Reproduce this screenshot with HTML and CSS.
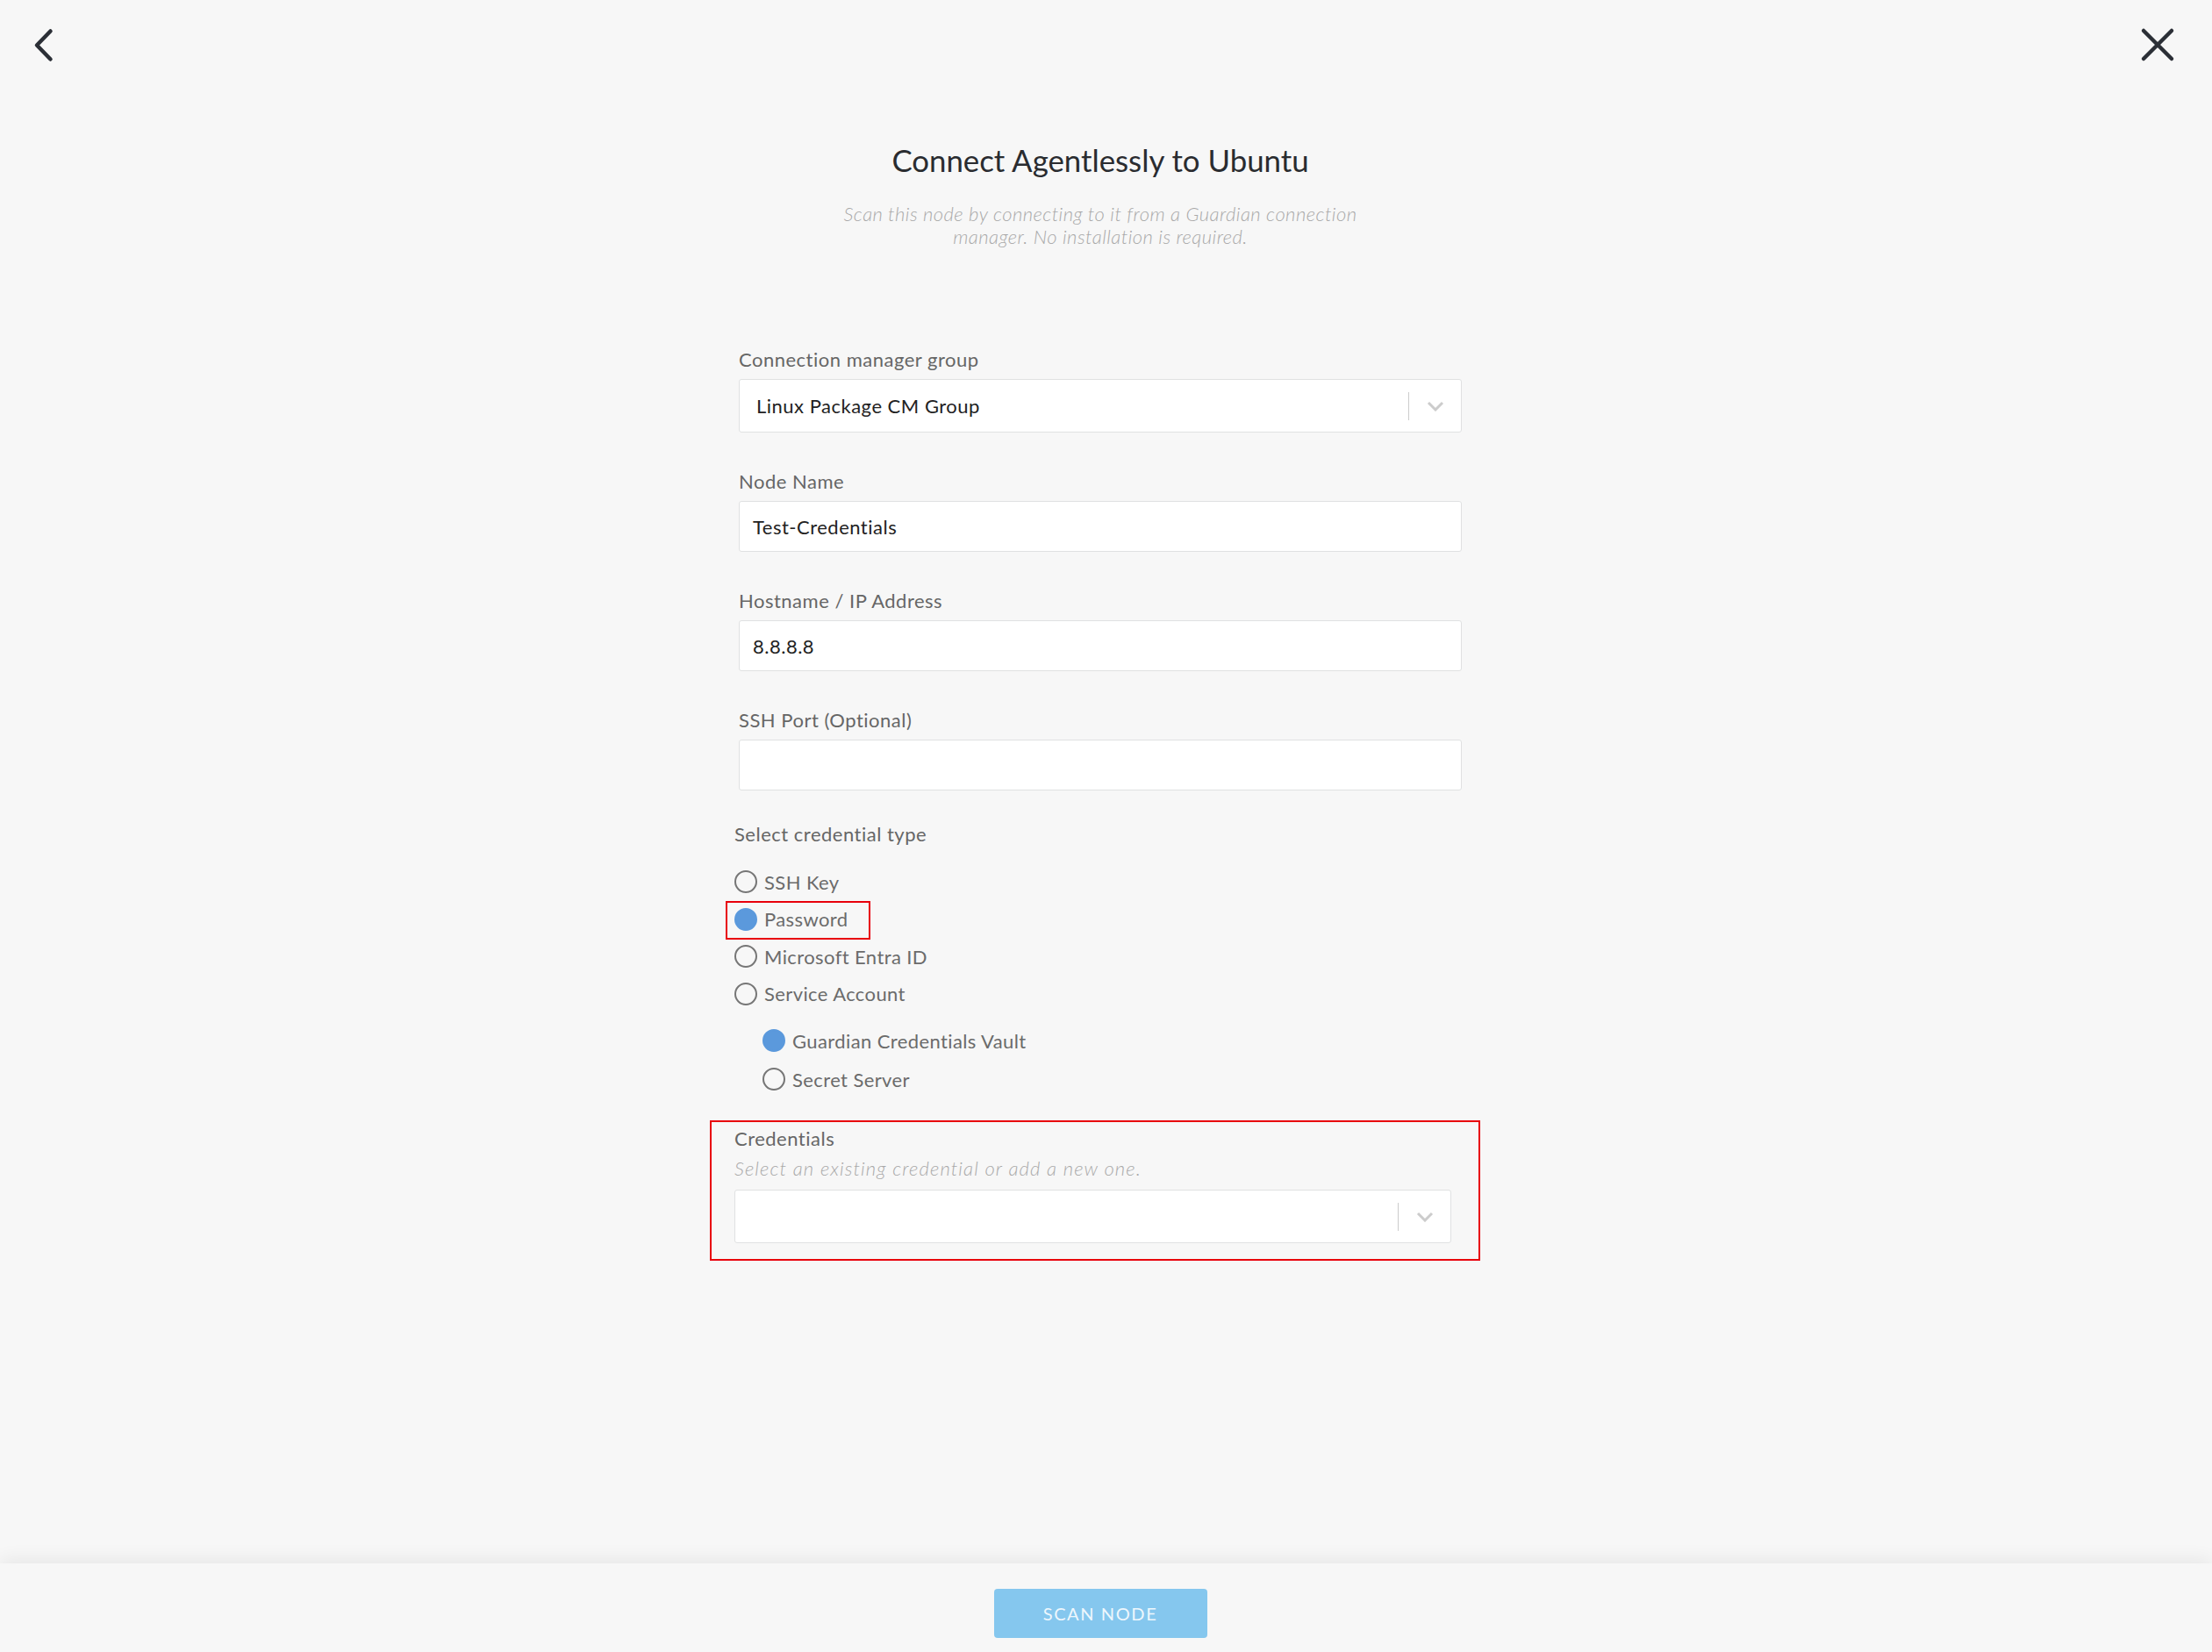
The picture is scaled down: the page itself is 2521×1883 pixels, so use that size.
FILE: index.html
```html
<!DOCTYPE html>
<html lang="en">
<head>
<meta charset="utf-8">
<title>Connect Agentlessly to Ubuntu</title>
<link rel="stylesheet" href="styles.css">
</head>
<body>
<div class="page">
  <header class="topbar">
    <button class="icon-btn back" type="button" aria-label="Back">
      <svg width="28" height="48" viewBox="0 0 28 48"><polyline points="21.5,7.5 6,23.5 21.5,39.5" fill="none" stroke="#2b2f36" stroke-width="4.5" stroke-linecap="round" stroke-linejoin="round"/></svg>
    </button>
    <button class="icon-btn close" type="button" aria-label="Close">
      <svg width="46" height="46" viewBox="0 0 46 46"><path d="M7 7 L39 39 M39 7 L7 39" fill="none" stroke="#2b2f36" stroke-width="4.5" stroke-linecap="round"/></svg>
    </button>
  </header>

  <main class="main">
    <div class="column">
      <h1 class="title">Connect Agentlessly to Ubuntu</h1>
      <p class="subtitle">Scan this node by connecting to it from a Guardian connection manager. No installation is required.</p>

      <div class="form">
        <div class="field">
          <div class="label">Connection manager group</div>
          <div class="select">
            <span class="select-value">Linux Package CM Group</span>
            <span class="select-sep"></span>
            <span class="select-arrow"><svg width="20" height="12" viewBox="0 0 20 12"><polyline points="2,2 10,10 18,2" fill="none" stroke="#cccccc" stroke-width="3"/></svg></span>
          </div>
        </div>

        <div class="field">
          <div class="label">Node Name</div>
          <div class="input">Test-Credentials</div>
        </div>

        <div class="field">
          <div class="label">Hostname / IP Address</div>
          <div class="input">8.8.8.8</div>
        </div>

        <div class="field">
          <div class="label">SSH Port (Optional)</div>
          <div class="input"></div>
        </div>

        <div class="cred-type">
          <div class="label">Select credential type</div>
          <div class="radio-list">
            <div class="radio"><span class="dot"></span><span class="radio-text">SSH Key</span></div>
            <div class="radio annot"><span class="dot on"></span><span class="radio-text">Password</span></div>
            <div class="radio"><span class="dot"></span><span class="radio-text">Microsoft Entra ID</span></div>
            <div class="radio"><span class="dot"></span><span class="radio-text">Service Account</span></div>
          </div>
          <div class="radio-list sub">
            <div class="radio tall"><span class="dot on"></span><span class="radio-text">Guardian Credentials Vault</span></div>
            <div class="radio tall"><span class="dot"></span><span class="radio-text">Secret Server</span></div>
          </div>
        </div>

        <div class="credentials">
          <div class="label">Credentials</div>
          <div class="helper">Select an existing credential or add a new one.</div>
          <div class="select cred-select">
            <span class="select-value"></span>
            <span class="select-sep"></span>
            <span class="select-arrow"><svg width="20" height="12" viewBox="0 0 20 12"><polyline points="2,2 10,10 18,2" fill="none" stroke="#cccccc" stroke-width="3"/></svg></span>
          </div>
        </div>
      </div>
    </div>
  </main>

  <footer class="footer">
    <button class="scan-btn" type="button">SCAN NODE</button>
  </footer>
</div>
</body>
</html>
```

FILE: styles.css
```css
* { box-sizing: border-box; }

html, body {
  margin: 0;
  padding: 0;
  height: 100%;
}

body {
  background: #f7f7f7;
  font-family: Lato, "Open Sans", "Liberation Sans", sans-serif;
  color: #2b2b2b;
}

.page {
  display: flex;
  flex-direction: column;
  height: 100vh;
  overflow: hidden;
}

.topbar {
  display: flex;
  justify-content: space-between;
  align-items: flex-start;
  height: 100px;
  padding: 28px 39px 0 36px;
  flex: none;
}

.icon-btn {
  border: 0;
  background: none;
  padding: 0;
  margin: 0;
  line-height: 0;
  cursor: pointer;
}

.main {
  flex: 1;
  padding-right: 13px;
}

.column {
  width: 824px;
  margin: 0 auto;
}

.title {
  margin: 62px 0 0;
  font-size: 34.8px;
  line-height: 42px;
  font-weight: 400;
  text-align: center;
  color: #2a2c30;
}

.subtitle {
  margin: 27px auto 0;
  max-width: 610px;
  font-size: 22px;
  line-height: 25.5px;
  letter-spacing: 0.45px;
  font-weight: 300;
  font-style: italic;
  text-align: center;
  color: #a9a9a9;
}

.form {
  margin-top: 115px;
}

.field {
  margin-bottom: 43px;
}

.label {
  font-size: 22px;
  line-height: 26px;
  letter-spacing: 0.5px;
  color: #666666;
  margin-bottom: 9px;
}

.input,
.select {
  background: #ffffff;
  border: 1px solid #e0e1e2;
  border-radius: 3px;
  font-size: 22px;
  letter-spacing: 0.5px;
  color: #222222;
  display: flex;
  align-items: center;
}

.input {
  height: 58px;
  padding: 0 15px;
}

.select {
  height: 61px;
  padding-left: 19px;
}

.select-value {
  flex: 1;
}

.select-sep {
  width: 1px;
  height: 32px;
  background: #cccccc;
}

.select-arrow {
  width: 59px;
  display: flex;
  justify-content: center;
  align-items: center;
  line-height: 0;
}

.cred-type {
  margin-top: -6px;
  margin-left: -5px;
}

.cred-type > .label {
  margin-bottom: 20px;
}

.radio-list.sub {
  margin-top: 10px;
  margin-left: 32px;
}

.radio {
  display: flex;
  align-items: center;
  height: 42.5px;
  position: relative;
}

.radio.tall {
  height: 44px;
}

.dot {
  width: 26px;
  height: 26px;
  border-radius: 50%;
  border: 2px solid #767676;
  background: transparent;
  flex: none;
}

.dot.on {
  border-color: #5b99dc;
  background: #5b99dc;
}

.radio-text {
  margin-left: 8px;
  font-size: 22px;
  letter-spacing: 0.4px;
  color: #6b6b6b;
}

.radio.annot::after {
  content: "";
  position: absolute;
  left: -10px;
  top: 0;
  height: 40px;
  width: 161px;
  border: 2px solid #e8000b;
}

.credentials {
  margin: 25px -21px 0 -33px;
  border: 2px solid #e8000b;
  padding: 6px 31px 18px 26px;
}

.credentials .label {
  margin-bottom: 8px;
}

.helper {
  font-size: 22px;
  line-height: 26px;
  letter-spacing: 1.1px;
  font-weight: 300;
  font-style: italic;
  color: #a9a9a9;
  margin-bottom: 11px;
}

.footer {
  flex: none;
  height: 101px;
  padding-top: 29px;
  display: flex;
  justify-content: center;
  align-items: flex-start;
  background: #f7f7f7;
  box-shadow: 0 -4px 20px rgba(0, 0, 0, 0.07);
  position: relative;
}

.scan-btn {
  width: 243px;
  height: 56px;
  margin-right: 13px;
  border: 0;
  border-radius: 4px;
  background: #85c7ee;
  color: #eef7fd;
  font-family: Lato, "Open Sans", "Liberation Sans", sans-serif;
  font-size: 20px;
  letter-spacing: 1.6px;
  cursor: pointer;
}
```
